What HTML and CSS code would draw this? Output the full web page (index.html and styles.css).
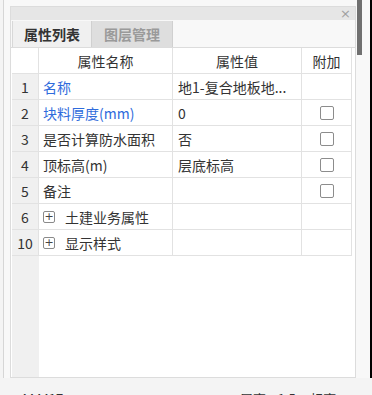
FILE: index.html
```html
<html>
    <head>
        <title>属性列表</title>
        <link rel="stylesheet" href="styles.css">
    </head>
    <body>
        <div class="main">
            <div class="frame">
                <div class="panel">
                    <div class="title-bar">
                        <span class="close">&#215;</span>
                    </div>
                    <div class="tabs">
                        <div class="tab tab-active">属性列表</div>
                        <div class="tab">图层管理</div>
                    </div>
                    <div class="grid-body">
                        <div class="row row-head">
                            <div class="cell cell-num head-num"></div>
                            <div class="cell cell-center">属性名称</div>
                            <div class="cell cell-center">属性值</div>
                            <div class="cell cell-center">附加</div>
                        </div>
                        <div class="row">
                            <div class="cell cell-num">1</div>
                            <div class="cell blue">名称</div>
                            <div class="cell cell-value">地1-复合地板地...</div>
                            <div class="cell cell-center"></div>
                        </div>
                        <div class="row">
                            <div class="cell cell-num">2</div>
                            <div class="cell blue">块料厚度(mm)</div>
                            <div class="cell cell-value">0</div>
                            <div class="cell cell-center"><span class="check"></span></div>
                        </div>
                        <div class="row">
                            <div class="cell cell-num">3</div>
                            <div class="cell">是否计算防水面积</div>
                            <div class="cell cell-value">否</div>
                            <div class="cell cell-center"><span class="check"></span></div>
                        </div>
                        <div class="row">
                            <div class="cell cell-num">4</div>
                            <div class="cell">顶标高(m)</div>
                            <div class="cell cell-value">层底标高</div>
                            <div class="cell cell-center"><span class="check"></span></div>
                        </div>
                        <div class="row">
                            <div class="cell cell-num">5</div>
                            <div class="cell">备注</div>
                            <div class="cell cell-value"></div>
                            <div class="cell cell-center"><span class="check"></span></div>
                        </div>
                        <div class="row">
                            <div class="cell cell-num">6</div>
                            <div class="cell"><span class="plus">+</span>土建业务属性</div>
                            <div class="cell cell-value"></div>
                            <div class="cell cell-center"></div>
                        </div>
                        <div class="row">
                            <div class="cell cell-num">10</div>
                            <div class="cell"><span class="plus">+</span>显示样式</div>
                            <div class="cell cell-value"></div>
                            <div class="cell cell-center"></div>
                        </div>
                        <div class="filler">
                            <div class="filler-num"></div>
                        </div>
                    </div>
                </div>
                <div class="side-gap">
                    <div class="thumb"></div>
                </div>
            </div>
            <div class="black-strip"></div>
        </div>
        <div class="status-bar">
            <span class="status-left">444417</span>
            <span class="status-right">层高&nbsp;&nbsp;&nbsp;&nbsp;1.5&nbsp;&nbsp;&nbsp;&nbsp;&nbsp;标高</span>
        </div>
    </body>
</html>
```
FILE: styles.css
```css
body{
    margin: 0;
    background-color: #f4f4f4;
    font-family: "Noto Sans CJK SC", "Noto Sans", sans-serif;
    font-size: 14px;
    color: #333;
    overflow: hidden;
}
.main{
    display: flex;
    height: 378px;
}
.frame{
    display: flex;
    width: 360px;
    margin-left: 3px;
    border-left: 1px solid #d6d6d6;
    padding-left: 6px;
    background-color: #f8f8f8;
}
.panel{
    margin-top: 6px;
    width: 344px;
    border: 1px solid #dcdcdc;
    background-color: #f8f8f8;
    display: flex;
    flex-direction: column;
}
.title-bar{
    height: 13px;
    background-color: #e6e6e6;
    display: flex;
    justify-content: flex-end;
    align-items: center;
}
.close{
    color: #a0a0a0;
    font-family: "DejaVu Sans", sans-serif;
    font-size: 13px;
    margin-right: 4px;
    line-height: 13px;
}
.tabs{
    height: 27px;
    display: flex;
    border-bottom: 1px solid #dcdcdc;
    background-color: #f8f8f8;
    padding-left: 1px;
}
.tab{
    width: 80px;
    display: flex;
    align-items: center;
    justify-content: center;
    font-weight: bold;
    color: #9a9a9a;
    background-color: #dedede;
    border-right: 1px solid #d0d0d0;
    margin-top: 1px;
}
.tab-active{
    width: 78px;
    color: #333;
    background-color: #f0f0f0;
    border-left: 1px solid #d8d8d8;
}
.grid-body{
    flex: 1;
    display: flex;
    flex-direction: column;
    background-color: #fff;
    padding-left: 1px;
}
.row{
    display: grid;
    grid-template-columns: 27px 134px 129px 50px;
    height: 26px;
    box-sizing: border-box;
    border-bottom: 1px solid #e2e2e2;
    width: 340px;
}
.cell{
    border-right: 1px solid #e2e2e2;
    display: flex;
    align-items: center;
    padding-left: 4px;
    white-space: nowrap;
    overflow: hidden;
}
.cell-num{
    background-color: #f0f0f0;
    justify-content: center;
    padding-left: 0;
}
.head-num{
    background-color: #fff;
}
.cell-center{
    justify-content: center;
    padding-left: 0;
}
.cell-value{
    padding-left: 5px;
}
.blue{
    color: #2f6bdc;
}
.check{
    width: 14px;
    height: 14px;
    border: 1px solid #8c8c8c;
    border-radius: 2px;
    box-sizing: border-box;
}
.plus{
    width: 12px;
    height: 12px;
    border: 1px solid #8a8a8a;
    border-radius: 2px;
    box-sizing: border-box;
    font-family: "DejaVu Sans", sans-serif;
    font-size: 11px;
    line-height: 9px;
    text-align: center;
    color: #444;
    margin-right: 10px;
}
.filler{
    flex: 1;
    display: flex;
}
.filler-num{
    width: 27px;
    background-color: #f0f0f0;
}
.side-gap{
    width: 5px;
    margin-left: 1px;
}
.thumb{
    height: 55px;
    background-color: #707070;
}
.black-strip{
    flex: 1;
    background-color: #000;
}
.status-bar{
    height: 17px;
    background-color: #f4f4f4;
    position: relative;
    font-size: 13px;
    color: #333;
}
.status-left{
    position: absolute;
    left: 20px;
    top: 11px;
}
.status-right{
    position: absolute;
    left: 240px;
    top: 11px;
}
```
